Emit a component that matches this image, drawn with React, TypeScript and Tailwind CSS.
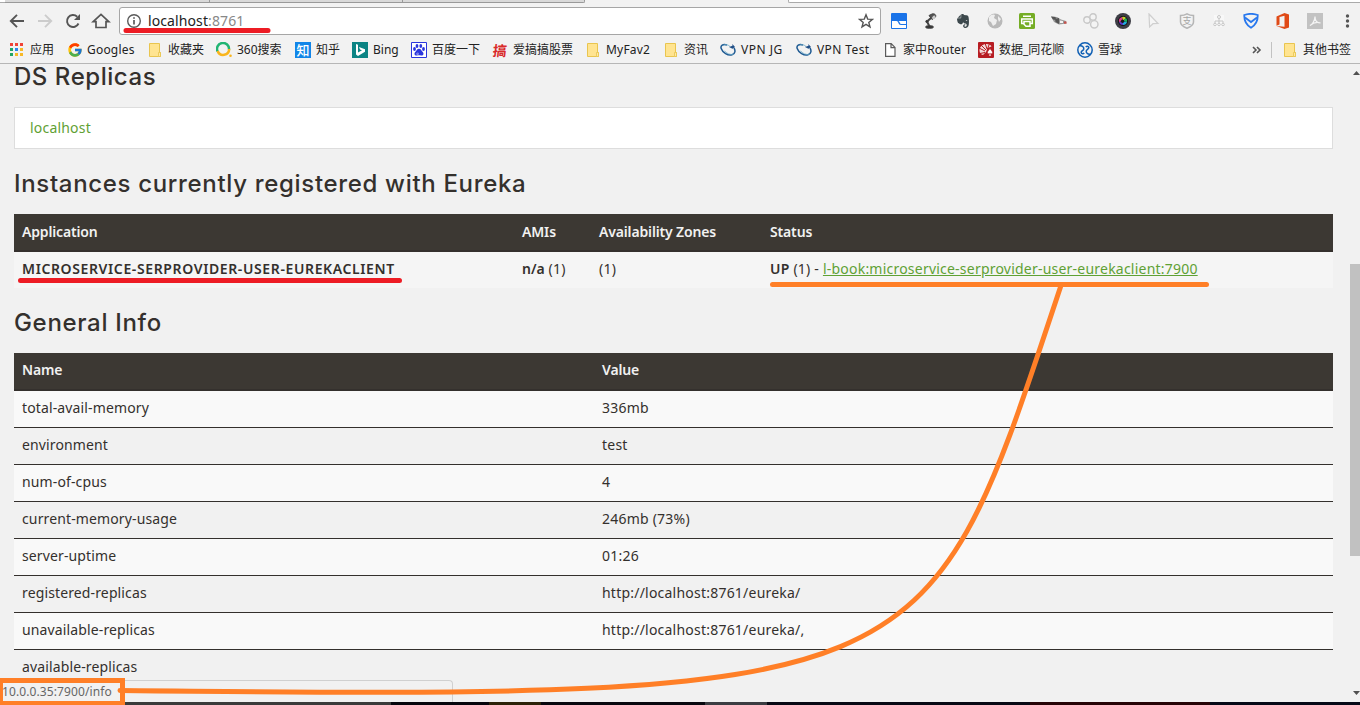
import React from "react";
import { FcGoogle } from "react-icons/fc";
import { FaEvernote } from "react-icons/fa";

const Folder = () => (
  <svg className="size-4" viewBox="0 0 16 16">
    <path d="M1.500 1.500h10v9h1v4h-11z" fill="#ffe491" stroke="#e9c54f" />
    <path d="M10.500 14v-3.500h2v4h-2" fill="#ffe9a5" stroke="#e9c54f" strokeWidth=".8" />
  </svg>
);

const Swirl = () => (
  <svg className="size-4" viewBox="0 0 16 16" fill="none">
    <path d="M7 3C3 1.500.2 3.500 1.200 6.500 2.500 10.500 8 14 12 12.800c3.500-1 3.500-4.500 2-6.800" stroke="#1f5a92" strokeWidth="1.500" />
    <path d="M3 3.500c2-1.500 5-1 7 1M13.500 12.300c-3 .8-7.500-.8-9-3.600" stroke="#67a7c7" strokeWidth=".8" />
    <path d="M9 5 12.500 3.800 12.300 2l2.700 3-2.500 1.800z" fill="#1f4e86" />
  </svg>
);

const Apps = () => {
  const colors = ["#f04438", "#f04438", "#f04438", "#22a565", "#2b86ee", "#f7b928", "#22a565", "#f7b928", "#f7b928"];
  return (
    <svg className="size-4" viewBox="0 0 16 16">
      {colors.map((c, i) => (
        <rect key={i} x={1 + (i % 3) * 5} y={1 + Math.floor(i / 3) * 5} width="3" height="3" fill={c} />
      ))}
    </svg>
  );
};

const Search360 = () => (
  <svg className="size-4" viewBox="0 0 16 16" fill="none" strokeWidth="2.500">
    <path d="M1.600 9.500A6 6 0 1 1 13 7.500" stroke="#22b573" />
    <path d="M1.600 9A6 6 0 0 0 13.200 7" stroke="#f9b51c" />
    <circle cx="14.500" cy="13.700" r="1.300" fill="#f9b51c" />
  </svg>
);

const Zhi = () => (
  <span className="flex size-4 items-center justify-center bg-[#1285e8] text-[13px] leading-4 font-medium text-white">知</span>
);

const Bing = () => (
  <svg className="size-4" viewBox="0 0 16 16">
    <path d="M0 0h16v16H0z" fill="#0c8484" />
    <path d="m4 2 2 .8v7.700l4-2.200-2-.9L7 5l6 2.200v2.600L6 14l-2-1.600z" fill="#fff" />
  </svg>
);

const Baidu = () => (
  <svg className="size-4" viewBox="0 0 16 16" fill="#2a35dd">
    <path d="M.5.5h15v15H.5z" fill="#fff" stroke="#2a35dd" />
    <ellipse cx="3.500" cy="7" rx="1.400" ry="1.900" />
    <ellipse cx="6" cy="4" rx="1.400" ry="2" />
    <ellipse cx="9.800" cy="4" rx="1.400" ry="2" />
    <ellipse cx="12.500" cy="7" rx="1.400" ry="1.900" />
    <path d="M8 6.800c2 0 2.500 2 3.700 3.200 1.600 1.800.6 4-1.700 3.500-1.300-.3-2.700-.3-4 0-2.300.5-3.300-1.700-1.700-3.500C5.500 8.800 6 6.800 8 6.800" />
    <path d="M5.800 11h1.500v1.500H5.800z" fill="none" stroke="#fff" strokeWidth=".4" />
  </svg>
);

const Gao = () => (
  <span className="flex size-4 -skew-x-6 items-center justify-center pb-px font-['Noto_Sans_CJK_SC',sans-serif] text-[14px] leading-4 font-bold text-[#d92a2a]">
    搞
  </span>
);

const Doc = () => (
  <svg className="size-4" viewBox="0 0 16 16" fill="#fff" stroke="#5a5a5a" strokeWidth="1.200">
    <path d="M.6 1.600h5.600L10 5.400v9H.6zM6 1.600v4h4" />
  </svg>
);

const Tonghuashun = () => (
  <svg className="size-4" viewBox="0 0 16 16">
    <rect width="16" height="16" rx="1" fill="#b71c22" />
    <path
      d="M1.500 8.500C1.500 4.500 5 2 8.500 2c2.500 0 4.500 1 5 2.500L9.500 6 8 10l-3 3c-2-.5-3.500-2-3.500-4.500"
      fill="#f3dada"
    />
    <path d="m1 6 6 3M3 3l5 5M7 1l2 6M11.500 1.500 9.500 7M2 11.500l5-1" stroke="#b71c22" strokeWidth="1" />
    <path d="M12 6.500c1 2 3 3 2.500 4.500-.4 1-1.500 1-2 .4l.7 2.600h-2.400l.7-2.600c-.5.6-1.600.6-2-.4C9 9.500 11 8.500 12 6.500" fill="#fff" stroke="#b71c22" strokeWidth=".5" />
  </svg>
);

const Xueqiu = () => (
  <svg className="size-4" viewBox="0 0 16 16" fill="none" stroke="#0f5fb4" strokeWidth="1.500">
    <circle cx="8" cy="8" r="7.200" />
    <path d="M2.800 3.800C5.500 3.500 7.200 5.500 6.700 7.300 6.200 8.800 3.800 9 4.200 10.800c.4 1.300 2.200 1.200 3 .2" />
    <path d="M13.200 12.200c-2.700.3-4.400-1.700-3.900-3.500.5-1.500 2.900-1.700 2.500-3.500-.4-1.300-2.200-1.200-3-.2" />
  </svg>
);

const bookmarks = [
  { label: "应用", icon: <Apps />, box: "w-[58px] gap-[5px]", text: "" },
  { label: "Googles", icon: <FcGoogle className="size-4" />, box: "w-[81px] gap-[4px]", text: "tracking-[0.2px]" },
  { label: "收藏夹", icon: <Folder />, box: "w-[68px] gap-[4px]", text: "" },
  { label: "360搜索", icon: <Search360 />, box: "w-[79px] gap-[5px]", text: "" },
  { label: "知乎", icon: <Zhi />, box: "w-[57px] gap-[5px]", text: "" },
  { label: "Bing", icon: <Bing />, box: "w-[59px] gap-[5px]", text: "" },
  { label: "百度一下", icon: <Baidu />, box: "w-[81px] gap-[5px]", text: "" },
  { label: "爱搞搞股票", icon: <Gao />, box: "w-[94px] gap-[5px]", text: "" },
  { label: "MyFav2", icon: <Folder />, box: "w-[78px] gap-[4px]", text: "tracking-[0.2px]" },
  { label: "资讯", icon: <Folder />, box: "w-[56px] gap-[4px]", text: "" },
  { label: "VPN JG", icon: <Swirl />, box: "w-[76px] gap-[5px]", text: "tracking-[0.5px]" },
  { label: "VPN Test", icon: <Swirl />, box: "w-[89px] gap-[5px]", text: "tracking-[0.4px]" },
  { label: "家中Router", icon: <Doc />, box: "w-[93px] gap-[2px]", text: "tracking-[0.1px]" },
  { label: "数据_同花顺", icon: <Tonghuashun />, box: "w-[99px] gap-[5px]", text: "" },
  { label: "雪球", icon: <Xueqiu />, box: "w-[175px] gap-[5px]", text: "" },
];

const extensions = [
  <svg className="size-4" viewBox="0 0 16 16">
    <rect width="16" height="16" rx="1" fill="#1a73e8" />
    <path d="M1 8h4.500q1.500 0 1.800 1.800Q7.800 12 10 12h5v3H1zM7.500 8H15v3h-4.500Q9 11 8.700 9.500 8.500 8.500 7.500 8" fill="#fff" />
  </svg>,
  <svg className="size-4" viewBox="0 0 16 16" fill="none" stroke="#454545">
    <path d="M6.500 13.500 4 8.500 8 5" strokeWidth="2" />
    <path d="m6 2.500 3-1.500c2.500-.8 4.500 1 3.500 3L9 6.500z" fill="#555" />
    <ellipse cx="10.700" cy="4.300" rx="1.300" ry="2" fill="#ccc" stroke="none" transform="rotate(40 10.700 4.300)" />
    <ellipse cx="6.500" cy="14" rx="4" ry="1.300" fill="#333" />
    <circle cx="4" cy="8.500" r="1.200" fill="#333" />
  </svg>,
  <FaEvernote className="size-4 text-[#3c484c]" />,
  <svg className="size-4" viewBox="0 0 16 16">
    <circle cx="8" cy="8" r="7.500" fill="#b9b9b9" />
    <path d="M2 4c2-3 5-3 6-2L7 5l3 2-1 4-3 2-2-4-2-1zM11 3l3 3-2 3-1-3z" fill="#eee" />
  </svg>,
  <svg className="size-4" viewBox="0 0 16 16">
    <rect width="16" height="16" rx="1.500" fill="#75ad25" />
    <path d="M4 3.200h8M4.500 10.500H2.700V6h10.600v4.500h-1.800M5 8.500h6v4.800H7l-2-2z" fill="none" stroke="#fff" strokeWidth="1.500" />
  </svg>,
  <svg className="size-4" viewBox="0 0 16 16">
    <path d="m0 3.500 6 .5 4 2.500 5 1.500.5 2.500L8 11.500 3 9z" fill="#999" />
    <path d="m0 3.500 4.500.5L5 7 2 6.500zM4 6l4-1v6L4.500 9z" fill="#555" />
    <path d="m9 7.500 3 .5v2H9z" fill="#f3f3f3" />
    <path d="M13 8.500h2.500v2.200H13z" fill="#c8504a" />
  </svg>,
  <svg className="size-4" viewBox="0 0 16 16" fill="#f4f4f4" stroke="#c8c8c8" strokeWidth="1.400">
    <circle cx="4" cy="7" r="3.200" />
    <circle cx="10" cy="4" r="3.200" />
    <circle cx="11.300" cy="11.300" r="3.700" />
  </svg>,
  <svg className="size-4" viewBox="0 0 16 16">
    <circle cx="8" cy="8" r="8" fill="#3d3d45" />
    <circle cx="8" cy="8" r="5" fill="#111" />
    <path d="M8 8 7 4a4 4 0 0 1 4 1z" fill="#c8d32a" />
    <path d="m8 8 3-3a4 4 0 0 1 1 4z" fill="#1cb454" />
    <path d="m8 8 4 1a4 4 0 0 1-4 3z" fill="#23a8e0" />
    <path d="M8 8v4a4 4 0 0 1-4-3z" fill="#5a36c8" />
    <path d="M8 8 4 9a4 4 0 0 1 3-5z" fill="#d8408a" />
    <circle cx="7.600" cy="8.300" r="1.700" fill="#171717" />
  </svg>,
  <svg className="size-4" viewBox="0 0 16 16" fill="#f5f5f5" stroke="#cfcfcf" strokeWidth="1.200">
    <path d="m2 1 9 9.500-5 .2L2.600 14z" />
  </svg>,
  <span className="relative flex size-4 items-center justify-center">
    <svg className="absolute size-4" viewBox="0 0 16 16" fill="none" stroke="#b5b5b5" strokeWidth="1.500">
      <path d="M1.500 2.500C4 2.500 6 2 8 .8c2 1.200 4 1.700 6.500 1.700V9c0 3-3.500 5-6.500 6.200C5 14 1.500 12 1.500 9z" />
    </svg>
    <span className="relative text-[9px] leading-4 text-[#a5a5a5]">支</span>
  </span>,
  <svg className="size-4" viewBox="0 0 16 16" fill="none" stroke="#c6c6c6">
    <path d="M3 2h10v12H3z" fill="#f8f8f8" stroke="none" />
    <circle cx="8" cy="4" r="1.500" />
    <path d="M8 5.500V10M4 10V8h8v2" />
    <circle cx="4" cy="11.500" r="1.300" />
    <circle cx="8" cy="11.500" r="1.300" />
    <circle cx="12" cy="11.500" r="1.300" />
  </svg>,
  <svg className="size-4" viewBox="0 0 16 16" fill="none" stroke="#2878ee" strokeWidth="1.800">
    <path d="M1.300 2C5 .7 11 .7 14.700 2 15 8 12.500 12 8 14.700 3.500 12 1 8 1.300 2z" />
    <path d="m2 4.500 6 4.500 6-4.500" />
  </svg>,
  <svg className="size-4" viewBox="0 0 16 16">
    <path d="m1.500 3.500 8-3.500L14 1.500v13L9.500 16l-8-3 8 .8V2.800L4.500 4v7.500l-3 1.300z" fill="#e04a17" />
  </svg>,
  <svg className="size-4" viewBox="0 0 16 16">
    <path d="M0 0h16v16H0z" fill="#c2c2c2" />
    <path d="M3 12.500c2-.5 5-5 5-9 0 4 2 6.500 5.500 6.500-3-1-7-.5-10.500 2.500z" fill="none" stroke="#f4f4f4" strokeWidth="1.200" />
  </svg>,
];

const Toolbar = () => (
  <div className="flex h-[34px] items-center pt-[1px] pl-[9px]">
    <svg className="h-4 w-[102px] shrink-0" viewBox="0 0 102 16" fill="none" stroke="#555" strokeWidth="1.900">
      <path d="M15 8H2M8 1.800 1.800 8 8 14.200" />
      <path d="M29 8h13M36 1.800 42.200 8 36 14.200" stroke="#ccc" />
      <path d="M69.500 10.500A6 6 0 1 1 68.200 3.700" />
      <path d="M71 1v6h-6z" fill="#555" stroke="none" />
      <path d="M84.200 8.600 92 1.300l7.800 7.300H97v5.900H87V8.600z" strokeWidth="1.700" />
    </svg>
    <div className="ml-2 flex h-7 w-[762px] items-center rounded-[3px] border border-[#a6a6a6] bg-white pr-[6px] pl-[6px]">
      <svg className="size-4" viewBox="0 0 16 16" fill="none" stroke="#5a5a5a" strokeWidth="1.400">
        <circle cx="8" cy="8" r="6.300" />
        <path d="M8 7v4.500M8 4.300v1.500" strokeWidth="1.700" />
      </svg>
      <span className="ml-[6px] flex-1 text-[14px] tracking-[0.1px] text-[#222]">
        localhost<span className="text-[#888]">:8761</span>
      </span>
      <svg className="size-4" viewBox="0 0 16 16" fill="none" stroke="#555" strokeWidth="1.400">
        <path d="m8 1.800 1.700 4.300 4.700.3-3.600 3 1.200 4.500-4-2.500-4 2.500 1.200-4.500-3.600-3 4.700-.3z" />
      </svg>
    </div>
    <div className="ml-[10px] flex gap-4">
      {extensions.map((e, i) => (
        <span key={i} className="flex size-4 items-center justify-center">{e}</span>
      ))}
    </div>
    <svg className="ml-[16px] size-4" viewBox="0 0 16 16" fill="#555">
      <circle cx="8.500" cy="3" r="1.700" />
      <circle cx="8.500" cy="8" r="1.700" />
      <circle cx="8.500" cy="13" r="1.700" />
    </svg>
  </div>
);

const Heading = ({ children, className }: { children: React.ReactNode; className: string }) => (
  <h1 className={"shrink-0 font-['Inter',sans-serif] text-[24px] font-[450] text-[#34302d] " + className}>{children}</h1>
);

const info = [
  ["total-avail-memory", "336mb"],
  ["environment", "test"],
  ["num-of-cpus", "4"],
  ["current-memory-usage", "246mb (73%)"],
  ["server-uptime", "01:26"],
  ["registered-replicas", "http://localhost:8761/eureka/"],
  ["unavailable-replicas", "http://localhost:8761/eureka/,"],
  ["available-replicas", ""],
];

const Page = () => (
  <main className="flex h-[638px] w-[1333px] flex-col pl-[14px] font-['Noto_Sans',sans-serif] text-[14px] leading-5 text-[#34302d]">
    <Heading className="leading-[26px] tracking-[0.55px]">DS Replicas</Heading>
    <div className="mt-[17px] flex h-[42px] shrink-0 items-center border border-[#ddd] bg-white pb-px pl-[15px] tracking-[0.2px] text-[#5fa134]">localhost</div>
    <Heading className="mt-[21px] leading-7 tracking-[0.67px]">Instances currently registered with Eureka</Heading>
    <div className="mt-4 grid h-[38px] shrink-0 grid-cols-[500px_77px_171px_1fr] items-center border-b-2 border-[#34302d] bg-[#3c3833] pb-px pl-2 font-semibold tracking-[-0.15px] text-[#f1f1f1]">
      <span>Application</span>
      <span>AMIs</span>
      <span>Availability Zones</span>
      <span>Status</span>
    </div>
    <div className="grid h-9 shrink-0 grid-cols-[500px_77px_171px_1fr] items-center bg-[#f5f5f5] pb-[2px] pl-2 tracking-[0.22px]">
      <b className="font-semibold tracking-[0.62px]">MICROSERVICE-SERPROVIDER-USER-EUREKACLIENT</b>
      <span><b className="font-semibold tracking-normal">n/a</b> (1)</span>
      <span>(1)</span>
      <span>
        <b className="font-semibold">UP</b> (1) -{" "}
        <a className="text-[#5fa134] underline">l-book:microservice-serprovider-user-eurekaclient:7900</a>
      </span>
    </div>
    <Heading className="mt-[21px] leading-7 tracking-[0.67px]">General Info</Heading>
    <div className="mt-4 grid h-[38px] shrink-0 grid-cols-[580px_1fr] items-center border-b-2 border-[#34302d] bg-[#3c3833] pb-[2px] pl-2 font-semibold tracking-[-0.15px] text-[#f1f1f1]">
      <span>Name</span>
      <span>Value</span>
    </div>
    {info.map(([name, value]) => (
      <div key={name} className="grid h-[37px] shrink-0 grid-cols-[580px_1fr] items-center border-b border-[#34302d] pb-[2px] pl-2 last:border-b-0 last:pb-[3px] odd:bg-[#f1f1f1] even:bg-[#f9f9f9]">
        <span className="tracking-[0.13px]">{name}</span>
        <span className="tracking-[0.22px]">{value}</span>
      </div>
    ))}
  </main>
);

export default function App() {
  return (
    <div className="relative h-[705px] w-[1360px] overflow-hidden bg-[#f1f1f1] font-['Noto_Sans','Noto_Sans_CJK_SC',sans-serif]">
      <header className="h-16 border-b border-[#b6b6b6] bg-[#f2f2f2]">
        <div className="flex h-[3px]">
          <div className="w-[5px] border-b border-[#aaa] bg-white" />
          <div className="w-[205px] border-r border-b border-[#999] bg-[#d9d9d9]" />
          <div className="w-[193px] border-r border-b border-[#999] bg-[#d9d9d9]" />
          <div className="w-[182px] rounded-br-[2px] border-r border-b border-[#999] bg-[#d9d9d9]" />
          <div className="w-[203px]" />
          <div className="flex-1 rounded-bl-[2px] border-b border-l border-[#aaa] bg-white" />
        </div>
        <Toolbar />
        <nav className="flex h-[25px] items-center pl-[9px] text-[12px] leading-4 text-[#222]">
          {bookmarks.map((b) => (
            <div key={b.label} className={"flex shrink-0 items-center whitespace-nowrap " + b.box}>
              {b.icon}
              <span className={b.text}>{b.label}</span>
            </div>
          ))}
          <svg className="h-3 w-[10px]" viewBox="0 0 10 12" fill="none" stroke="#555" strokeWidth="1.600">
            <path d="m1 3 3 3-3 3M5 3l3 3-3 3" />
          </svg>
          <span className="ml-[9px] h-4 w-px bg-[#c2c2c2]" />
          <span className="ml-[11px]"><Folder /></span>
          <span className="ml-[4px] whitespace-nowrap">其他书签</span>
        </nav>
      </header>
      <div className="flex h-[638px] justify-between">
        <Page />
        <aside className="flex h-[638px] w-[10px] flex-col">
          <svg className="h-[200px] w-[10px]" viewBox="0 0 10 200" fill="#505050">
            <path d="M3 11 6.500 7 10 11z" />
          </svg>
          <div className="h-[292px] bg-[#c1c1c1]" />
          <svg className="h-[146px] w-[10px]" viewBox="0 0 10 146" fill="#505050">
            <path d="m3 135 3.500 4 3.500-4z" />
          </svg>
        </aside>
      </div>
      <footer className="flex h-[3px]">
        <div className="w-[391px] bg-[#3a3a3a]" />
        <div className="w-[98px] bg-[#05050c]" />
        <div className="w-[52px] bg-[#2c2208]" />
        <div className="w-[164px] bg-[#08080f]" />
        <div className="w-[62px] bg-[#3b3d42]" />
        <div className="w-[263px] bg-[#080914]" />
        <div className="w-[180px] bg-[#260306]" />
        <div className="flex-1 bg-[#060917]" />
      </footer>
      <div className="absolute top-[680px] left-0 h-[22px] w-[453px] rounded-tr-[4px] border-t border-r border-[#d0d0d0] bg-[#f1f1f1] pl-[2px] font-['Noto_Sans',sans-serif] text-[12px] leading-[21px] tracking-[0.1px] text-[#666]">
        10.0.0.35:7900/info
      </div>
      <svg className="pointer-events-none absolute inset-0 h-[705px] w-[1360px]" viewBox="0 0 1360 705" fill="none" strokeWidth="5" strokeLinecap="round">
        <path d="M126 30.500H268M20.500 280.500H399.500" stroke="#ed1c24" />
        <g stroke="#ff7f27">
          <path d="M772.500 284.500H1206.500" />
          <path d="M1060.500 287C926 692 939 699 120 690.500" />
          <path d="M0 680.500H122.500V703.500H0" strokeLinecap="butt" />
          <path d="M1.500 678v27" strokeWidth="3" strokeLinecap="butt" />
        </g>
      </svg>
    </div>
  );
}
